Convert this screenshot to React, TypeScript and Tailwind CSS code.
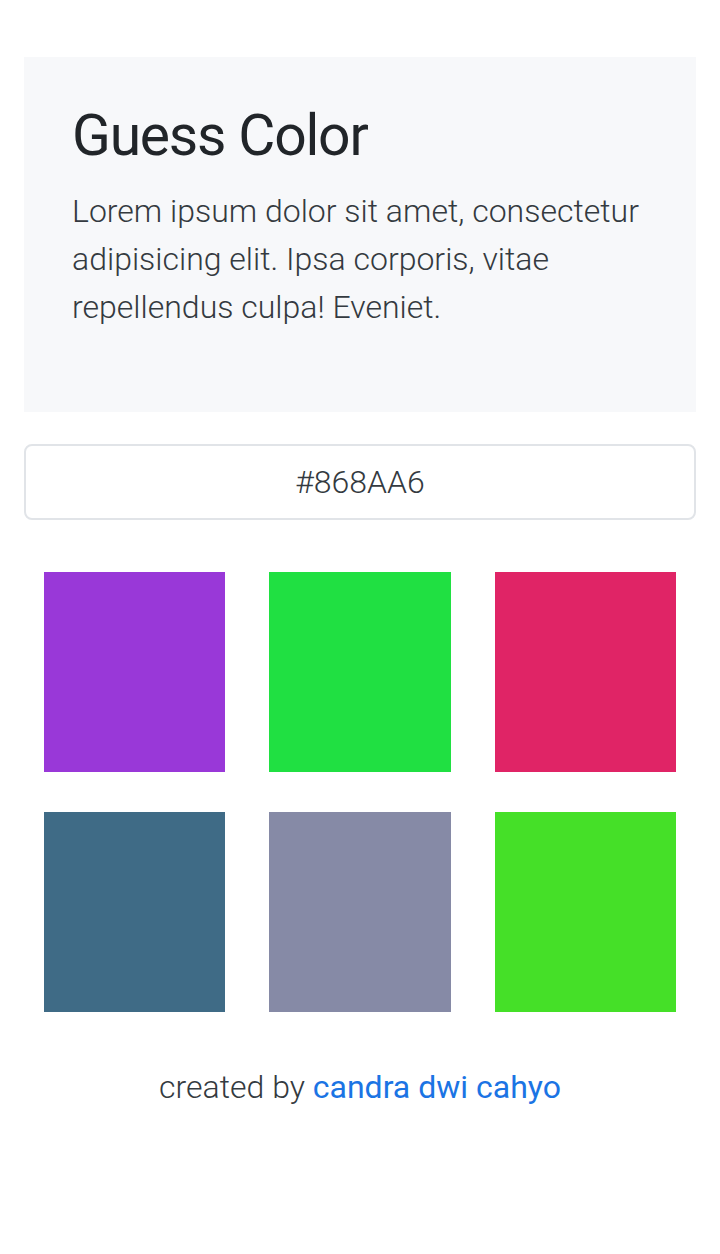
import React from 'react';

const colors = ['#9938d8', '#20e042', '#e02466', '#3f6b86', '#868aa6', '#45e028'];

export default function App() {
  return (
    <div className="min-h-screen bg-white px-6 pt-[57px] font-['Roboto',sans-serif] text-[#212529]">
      {/* jumbotron */}
      <div className="bg-[#f7f8fa] px-12 pt-[43px] pb-[81px]">
        <h1 className="mb-[15px] text-[57px] leading-[72px] font-normal tracking-[-1.2px]">Guess Color</h1>
        <p className="text-[32px] leading-[48px] font-light text-[#343a40]">
          Lorem ipsum dolor sit amet, consectetur adipisicing elit. Ipsa corporis, vitae repellendus culpa! Eveniet.
        </p>
      </div>

      {/* current color */}
      <div className="mt-[32px] flex h-[76px] items-center justify-center rounded-lg border-2 border-[#e1e4e8] text-[32px] font-light text-[#343a40]">
        #868AA6
      </div>

      {/* options */}
      <div className="mt-[52px] grid grid-cols-3 gap-x-[44px] gap-y-[40px] px-5">
        {colors.map((c) => (
          <div key={c} className="h-[200px]" style={{ backgroundColor: c }} />
        ))}
      </div>

      <p className="mt-[51px] text-center text-[32px] leading-[48px] font-light text-[#343a40]">
        created by <a href="#" className="font-normal text-[#1b74e4]">candra dwi cahyo</a>
      </p>
    </div>
  );
}
